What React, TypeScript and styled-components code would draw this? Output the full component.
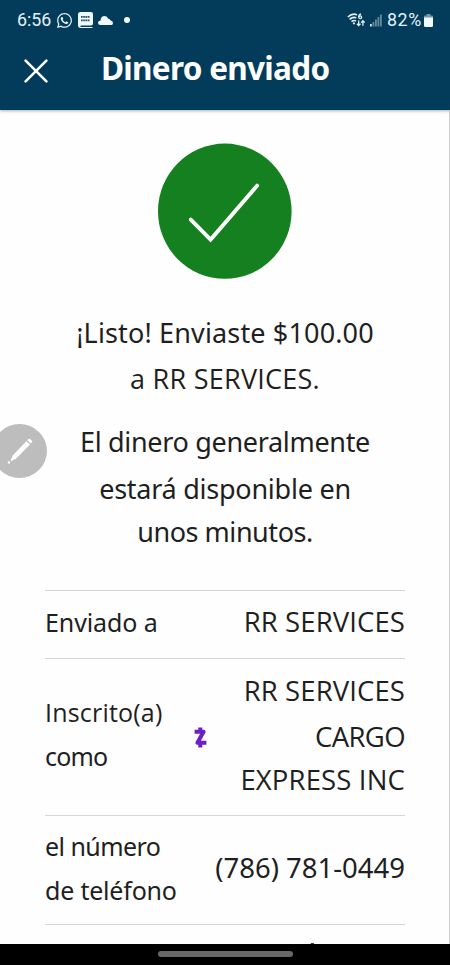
import React from "react";
import styled, { createGlobalStyle } from "styled-components";
import { FaWhatsapp } from "react-icons/fa";

interface ILine {
  h: number;
  ls?: number;
  caps?: boolean;
}

interface IRow {
  height: number;
  pb?: number;
}

const App: React.FC = () => {
  return (
    <Screen>
      <GlobalStyle />
      <TopBar>
        <StatusBar>
          <StatusGroup>
            <StatusText>6:56</StatusText>
            <WhatsappIcon />
            <BibleIcon />
            <CloudIcon />
            <Dot />
          </StatusGroup>
          <StatusGroup>
            <WifiIcon />
            <SignalIcon />
            <Battery>
              <StatusText>82%</StatusText>
              <BatteryIcon />
            </Battery>
          </StatusGroup>
        </StatusBar>
        <Header>
          <CloseButton aria-label="Cerrar">
            <svg width="24" height="24" viewBox="0 0 24 24">
              <path
                d="M1.6 1.6 22.4 22.4M22.4 1.6 1.6 22.4"
                stroke="#fff"
                strokeWidth="2.6"
                strokeLinecap="round"
              />
            </svg>
          </CloseButton>
          <Title>Dinero enviado</Title>
        </Header>
      </TopBar>
      <Content>
        <SuccessIcon />
        <Message>
          <Line h={47} ls={0.15}>
            ¡Listo! Enviaste $100.00
          </Line>
          <Line h={46} ls={0.25} caps>
            a RR SERVICES.
          </Line>
        </Message>
        <Message>
          <Line h={46} ls={-0.32}>
            El dinero generalmente
          </Line>
          <Line h={47} ls={-0.25}>
            estará disponible en
          </Line>
          <Line h={39} ls={-0.45}>
            unos minutos.
          </Line>
        </Message>
        <Details>
          <Row height={68} pb={6}>
            <Label>
              <Line h={44} ls={-0.1}>
                Enviado a
              </Line>
            </Label>
            <Value>
              <Line h={46} ls={0.1} caps>
                RR SERVICES
              </Line>
            </Value>
          </Row>
          <Row height={157} pb={7}>
            <Label>
              <Line h={45} ls={0.2} caps>
                Inscrito(a)
              </Line>
              <Line h={42} ls={-0.8}>
                como
              </Line>
            </Label>
            <ZelleIcon />
            <Value>
              <Line h={46} ls={0.1} caps>
                RR SERVICES
              </Line>
              <Line h={46} ls={-0.6} caps>
                CARGO
              </Line>
              <Line h={40} ls={0.15} caps>
                EXPRESS INC
              </Line>
            </Value>
          </Row>
          <Row height={109} pb={4}>
            <Label>
              <Line h={43} ls={-0.55}>
                el número
              </Line>
              <Line h={44} ls={-0.2}>
                de teléfono
              </Line>
            </Label>
            <Value>
              <Line h={46}>(786) 781-0449</Line>
            </Value>
          </Row>
          <Row height={60}>
            <Accent />
          </Row>
        </Details>
      </Content>
      <PenButton>
        <svg width="28" height="28" viewBox="0 0 28 28" fill="#fff">
          <path d="M20.3 4.2 24 7.6 10.2 21.5 5.6 24 4.6 23 7 18.2Z" />
          <path d="m21.3 3.2 1.3-1.2q.7-.6 1.4 0l1.9 1.8q.8.8.1 1.5l-1.1 1.2Z" />
          <circle cx="2.9" cy="25.4" r="1.2" />
        </svg>
      </PenButton>
      <NavBar>
        <Handle />
      </NavBar>
    </Screen>
  );
};

const BibleIcon = () => (
  <svg width="15" height="16" viewBox="0 0 15 16">
    <path
      d="M2.5 0H13q2 0 2 2v9.5q0 2-2 2H3.5q-1.3 0-1.3.7t1.3.7H15q-.5 1-2 1H2.8Q0 15.9 0 13V2.5Q0 0 2.5 0Z"
      fill="#eef8fd"
    />
    <path
      d="M3 4.9h9M3 8.3h9"
      stroke="#294f66"
      strokeWidth="1.8"
      strokeDasharray="1.7 .5"
    />
  </svg>
);

const CloudIcon = () => (
  <svg width="15" height="9" viewBox="0 0 15 9">
    <path
      d="M2.5 9Q0 9 0 6.8T2.5 4.4Q3 0 6.6 0 9.3 0 10.2 2.8 12 2.6 12.6 4.6 15 4.8 15 7T12.8 9Z"
      fill="#eef8fd"
    />
  </svg>
);

const WifiIcon = () => (
  <svg width="18" height="14" viewBox="0 0 18 14" fill="none" stroke="#e3f0f6">
    <path
      d="M.8 4Q5.5-.4 10.2 1.9M2.6 6.4Q6 3.3 9.3 4.9M4.5 8.6Q6.8 6.8 9 8"
      strokeWidth="1.6"
    />
    <circle cx="6.9" cy="10.3" r="1.1" fill="#e3f0f6" stroke="none" />
    <path d="M14 .8Q11.6 1.5 11.7 4" strokeWidth="1.3" />
    <circle cx="13.2" cy="4.3" r="1.4" strokeWidth="1.3" />
    <path
      d="M11.7 7.5v5M9.9 10.7l1.8 1.9 1.8-1.9M15.9 12.8v-5M14.1 9.6l1.8-1.9 1.8 1.9"
      strokeWidth="1.3"
    />
  </svg>
);

const SignalIcon = () => (
  <svg width="12" height="13" viewBox="0 0 12 13">
    <rect x="0" y="10" width="1.7" height="2.5" fill="#d8e8ef" />
    <path
      d="M3.4 12.5V8M5.9 12.5V5.6M8.4 12.5V3M10.9 12.5V.5"
      stroke="#66899c"
      strokeWidth="1.8"
    />
  </svg>
);

const BatteryIcon = () => (
  <svg width="9" height="13" viewBox="0 0 9 13">
    <path d="M2.5 0h4v1.5H8q1 0 1 1V5H0V2.5q0-1 1-1h1.5Z" fill="#7895a5" />
    <path d="M0 3.5h9V11.5q0 1.5-1.5 1.5h-6Q0 13 0 11.5Z" fill="#f1fafe" />
  </svg>
);

const SuccessIcon = () => (
  <svg width="134" height="136" viewBox="0 0 134 136">
    <ellipse cx="66.8" cy="68.2" rx="66.8" ry="67.6" fill="#148020" />
    <path
      d="M32.8 76.6 52.6 96.6 99.2 42.6"
      fill="none"
      stroke="#fff"
      strokeWidth="3.8"
      strokeLinecap="round"
    />
  </svg>
);

const ZelleIcon = () => (
  <ZelleSvg width="13" height="21" viewBox="0 0 13 21">
    <path
      d="M.6 4.8H9.6L3.4 15.8H12.4M6.3.4V4M6.3 16.6V20.6"
      fill="none"
      stroke="#6a1fc7"
      strokeWidth="4"
      strokeLinejoin="round"
    />
  </ZelleSvg>
);

const GlobalStyle = createGlobalStyle`
  * {
    box-sizing: border-box;
  }
  body {
    margin: 0;
    background-color: #fff;
  }
`;

const Screen = styled.div`
  position: relative;
  display: flex;
  flex-direction: column;
  width: 450px;
  height: 965px;
  overflow: hidden;
  background-color: #fefefe;
  color: #1f1f1f;
  font-family: "Noto Sans", "Open Sans", sans-serif;
`;

const TopBar = styled.div`
  flex: none;
  height: 110px;
  background-color: #023c5a;
  box-shadow: 0 1px 3px rgba(0, 40, 60, 0.35);
  z-index: 1;
`;

const StatusBar = styled.div`
  display: flex;
  justify-content: space-between;
  align-items: center;
  height: 40px;
  padding: 0 17px;
`;

const StatusGroup = styled.div`
  display: flex;
  align-items: center;
  gap: 5px;
`;

const StatusText = styled.span`
  font-family: Roboto, sans-serif;
  font-size: 17.8px;
  line-height: 20px;
  color: #e4f2f8;
`;

const Battery = styled.div`
  display: flex;
  align-items: center;
  gap: 2px;

  ${StatusText} {
    letter-spacing: 0.7px;
  }
`;

const WhatsappIcon = styled(FaWhatsapp)`
  width: 17px;
  height: 17px;
  color: #e4f2f8;
`;

const Dot = styled.span`
  width: 6px;
  height: 6px;
  margin-left: 6px;
  border-radius: 50%;
  background-color: #f2fafe;
`;

const Header = styled.div`
  display: flex;
  align-items: center;
  height: 62px;
  padding-left: 24px;
`;

const CloseButton = styled.button`
  display: flex;
  padding: 0;
  border: none;
  background: none;
`;

const Title = styled.h1`
  margin: 0 0 7px 53px;
  font-size: 31.5px;
  font-weight: 700;
  line-height: 44px;
  letter-spacing: -0.7px;
  color: #fff;
  white-space: nowrap;
`;

const Content = styled.main`
  flex: 1;
  display: flex;
  flex-direction: column;
  align-items: center;
  min-height: 0;
  padding: 33px 0 0;
  border-right: 1px solid #cfcfcf;
  overflow: hidden;

  > svg {
    flex: none;
    margin-bottom: 30px;
  }
`;

const Message = styled.div`
  flex: none;
  margin: 0 0 17px 1px;
  font-size: 27px;
  text-align: center;
`;

const Line = styled.div<ILine>`
  height: ${(p) => p.h}px;
  line-height: ${(p) => p.h}px;
  letter-spacing: ${(p) => p.ls || 0}px;
  font-family: ${(p) => (p.caps ? '"Open Sans"' : '"Noto Sans"')}, sans-serif;
  white-space: nowrap;
`;

const Details = styled.div`
  flex: none;
  width: 360px;
  margin: 22px 0 0 1px;
`;

const Row = styled.div<IRow>`
  display: flex;
  justify-content: space-between;
  align-items: center;
  height: ${(p) => p.height}px;
  padding-bottom: ${(p) => p.pb || 0}px;
  border-top: 1px solid #d5d5d5;
`;

const Label = styled.div`
  width: 149px;
  font-size: 25px;
`;

const Value = styled.div`
  flex: 1;
  display: flex;
  flex-direction: column;
  align-items: flex-end;
  font-size: 27.5px;
`;

const ZelleSvg = styled.svg`
  flex: none;
  margin-top: 8px;
`;

/* top of the accented letter in the row that scrolls under the nav bar */
const Accent = styled.span`
  align-self: flex-start;
  width: 3px;
  height: 4px;
  margin: 18px 92px 0 auto;
  background-color: #333;
  transform: skewX(-30deg);
`;

const PenButton = styled.div`
  position: absolute;
  top: 424px;
  left: -8px;
  display: flex;
  align-items: center;
  justify-content: center;
  width: 55px;
  height: 54px;
  border-radius: 50%;
  background-color: #bdbdbd;
`;

const NavBar = styled.div`
  flex: none;
  display: flex;
  justify-content: center;
  height: 21px;
  padding-top: 7px;
  background-color: #000;
`;

const Handle = styled.div`
  width: 135px;
  height: 6px;
  border-radius: 3px;
  background-color: #686868;
`;

export default App;
